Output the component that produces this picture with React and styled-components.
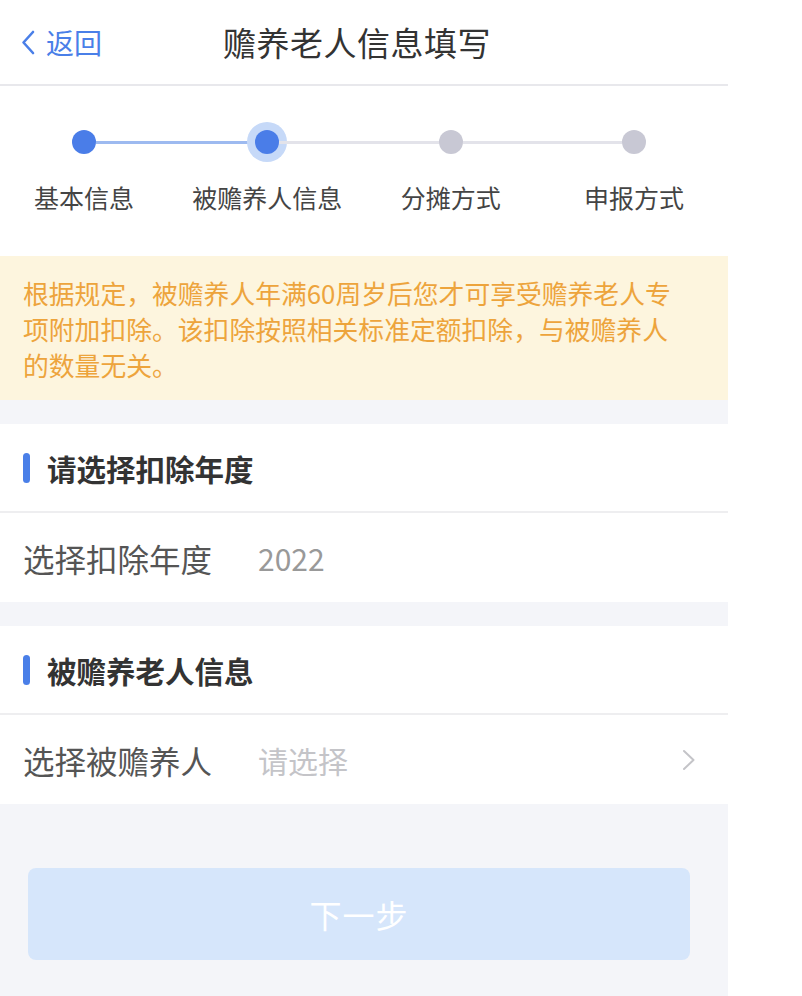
import React from "react";
import styled, { createGlobalStyle } from "styled-components";

const GlobalStyle = createGlobalStyle`
  html, body { margin: 0; padding: 0; background: #ffffff; }
  body { font-family: "Noto Sans CJK SC", "Noto Sans", sans-serif; }
  * { box-sizing: border-box; }
`;

const Page = styled.div`
  width: 728px;
  min-height: 996px;
  background: #f4f5f9;
  display: flex;
  flex-direction: column;
`;

const Header = styled.header`
  height: 86px;
  background: #fff;
  border-bottom: 2px solid #e8e8ec;
  display: grid;
  grid-template-columns: 180px 1fr 180px;
  align-items: center;
`;

const Back = styled.div`
  display: flex;
  align-items: center;
  gap: 11px;
  padding-left: 21px;
  color: #4a7fe8;
  font-size: 28px;
  line-height: 1;
`;

const Title = styled.h1`
  margin: 0;
  text-align: center;
  font-size: 33px;
  font-weight: 400;
  color: #333;
  letter-spacing: 0.5px;
  margin-left: -14px;
`;

const Steps = styled.section`
  background: #fff;
  height: 170px;
  padding-top: 44px;
`;

const Track = styled.div`
  display: flex;
  align-items: center;
  padding: 0 82px 0 72px;
  height: 24px;
`;

const Dot = styled.span`
  width: 24px;
  height: 24px;
  border-radius: 50%;
  flex: none;
  background: ${(p) => (p.$done || p.$active ? "#4a7de8" : "#c8c8d4")};
  box-shadow: ${(p) => (p.$active ? "0 0 0 8px #c6d9f8" : "none")};
`;

const Line = styled.span`
  flex: 1;
  height: 3px;
  background: ${(p) => (p.$done ? "#9dbaf0" : "#e3e3ea")};
`;

const Labels = styled.div`
  display: grid;
  grid-template-columns: repeat(4, 160px);
  column-gap: 23.33px;
  padding-left: 4px;
  margin-top: 25px;
`;

const Label = styled.div`
  text-align: center;
  white-space: nowrap;
  font-size: 25px;
  line-height: 36px;
  color: #444;
`;

const Notice = styled.div`
  background: #fdf5de;
  height: 144px;
  padding: 19px 44px 0 23px;
  color: #eda43c;
  font-size: 25.8px;
  line-height: 36px;
`;

const Card = styled.section`
  background: #fff;
  margin-top: 24px;
`;

const CardHeader = styled.div`
  height: 89px;
  display: flex;
  align-items: center;
  gap: 17px;
  padding-left: 23px;
  border-bottom: 2px solid #eeeef0;
`;

const Bar = styled.span`
  width: 7px;
  height: 30px;
  border-radius: 4px;
  background: #4a7fe8;
`;

const CardTitle = styled.h2`
  margin: 0;
  font-size: 29.5px;
  font-weight: 700;
  color: #333;
`;

const Row = styled.div`
  height: 89px;
  display: flex;
  align-items: center;
  padding: 0 32px 0 23px;
`;

const RowLabel = styled.span`
  width: 235px;
  flex: none;
  font-size: 31.5px;
  color: #555;
  white-space: nowrap;
`;

const RowValue = styled.span`
  flex: 1;
  font-size: 30px;
  color: ${(p) => (p.$placeholder ? "#c4c4c8" : "#999")};
  white-space: nowrap;
`;

const Footer = styled.div`
  padding: 64px 38px 0 28px;
`;

const NextButton = styled.button`
  width: 100%;
  height: 92px;
  border: none;
  border-radius: 8px;
  background: #d6e6fb;
  color: #fff;
  font-family: inherit;
  font-size: 32px;
  letter-spacing: 1px;
`;

const steps = ["基本信息", "被赡养人信息", "分摊方式", "申报方式"];
const current = 1;

export default function App() {
  return (
    <>
      <GlobalStyle />
      <Page>
        <Header>
          <Back>
            <svg width="14" height="25" viewBox="0 0 14 25" fill="none">
              <path d="M12 2 L2.5 12.5 L12 23" stroke="#4a7fe8" strokeWidth="2.6" strokeLinecap="round" strokeLinejoin="round" />
            </svg>
            <span>返回</span>
          </Back>
          <Title>赡养老人信息填写</Title>
          <span />
        </Header>

        <Steps>
          <Track>
            {steps.map((s, i) => (
              <React.Fragment key={s}>
                {i > 0 && <Line $done={i <= current} />}
                <Dot $done={i < current} $active={i === current} />
              </React.Fragment>
            ))}
          </Track>
          <Labels>
            {steps.map((s) => (
              <Label key={s}>{s}</Label>
            ))}
          </Labels>
        </Steps>

        <Notice>
          根据规定，被赡养人年满60周岁后您才可享受赡养老人专项附加扣除。该扣除按照相关标准定额扣除，与被赡养人的数量无关。
        </Notice>

        <Card>
          <CardHeader>
            <Bar />
            <CardTitle>请选择扣除年度</CardTitle>
          </CardHeader>
          <Row>
            <RowLabel>选择扣除年度</RowLabel>
            <RowValue>2022</RowValue>
          </Row>
        </Card>

        <Card>
          <CardHeader>
            <Bar />
            <CardTitle>被赡养老人信息</CardTitle>
          </CardHeader>
          <Row>
            <RowLabel>选择被赡养人</RowLabel>
            <RowValue $placeholder>请选择</RowValue>
            <svg width="14" height="22" viewBox="0 0 14 22" fill="none">
              <path d="M2 2 L11.5 11 L2 20" stroke="#c4c4c8" strokeWidth="2" strokeLinecap="round" strokeLinejoin="round" />
            </svg>
          </Row>
        </Card>

        <Footer>
          <NextButton>下一步</NextButton>
        </Footer>
      </Page>
    </>
  );
}
